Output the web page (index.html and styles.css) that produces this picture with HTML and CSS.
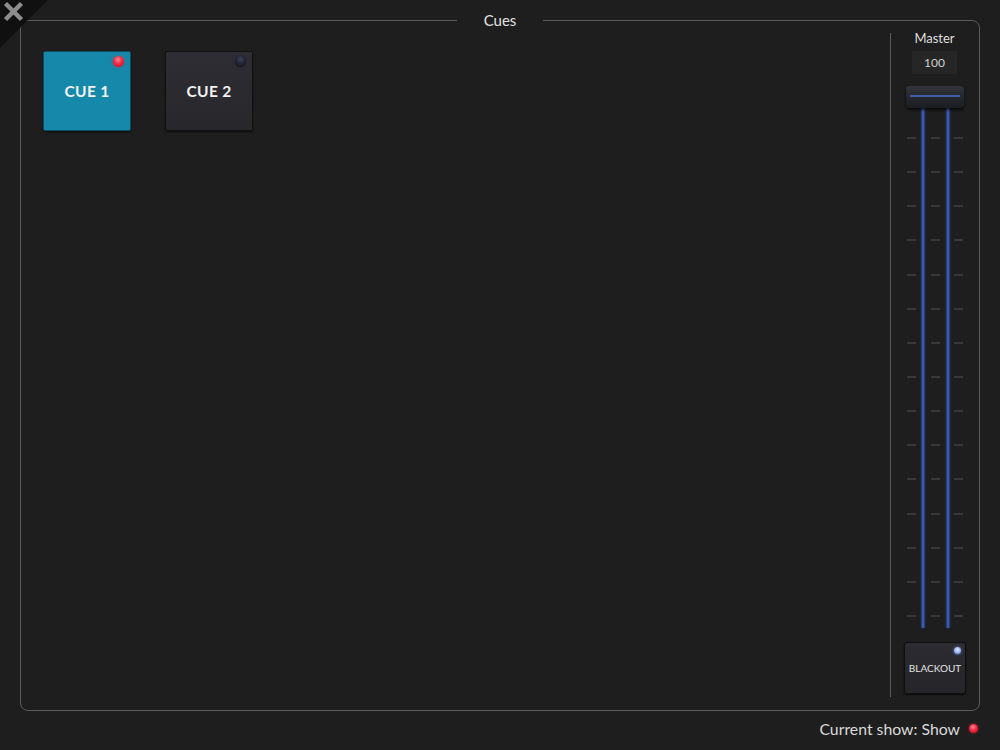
FILE: index.html
```html
<!DOCTYPE html>
<html>
<head>
    <title>Cues</title>
    <link rel="stylesheet" href="styles.css">
</head>
<body>
    <a class="close" href="#" title="Close">
        <svg width="48" height="48" viewBox="0 0 48 48">
            <polygon points="0,0 48,0 0,48" fill="#101010"/>
            <path d="M5.5 3.5 L21.5 19.5 M21.5 3.5 L5.5 19.5" stroke="#8d8d8d" stroke-width="4.5" stroke-linecap="butt"/>
        </svg>
    </a>

    <fieldset class="cues">
        <legend>Cues</legend>
        <div class="cues-body">
            <div class="cue-grid">
                <button class="cue active">CUE 1<span class="led red"></span></button>
                <button class="cue">CUE 2<span class="led off"></span></button>
            </div>

            <div class="divider"></div>

            <div class="master">
                <div class="master-label">Master</div>
                <div class="master-value">100</div>
                <div class="fader">
                    <div class="track">
                        <div class="ticks" id="ticks1"></div>
                        <div class="rail"></div>
                        <div class="ticks" id="ticks2"></div>
                        <div class="rail"></div>
                        <div class="ticks" id="ticks3"></div>
                    </div>
                    <div class="knob"><span class="knob-line"></span></div>
                </div>
                <button class="blackout">BLACKOUT<span class="led blue"></span></button>
            </div>
        </div>
    </fieldset>

    <div class="footer">
        <span>Current show: Show</span>
        <span class="led red small"></span>
    </div>

    <script>
        // fill the fader scale
        ['ticks1', 'ticks2', 'ticks3'].forEach(function (id) {
            var col = document.getElementById(id);
            for (var i = 0; i < 15; i++) {
                var t = document.createElement('span');
                t.className = 'tick';
                col.appendChild(t);
            }
        });
    </script>
</body>
</html>
```

FILE: styles.css
```css
body {
    margin: 0;
    width: 1000px;
    height: 750px;
    overflow: hidden;
    background-color: #1e1e1e;
    font-family: Lato, "Open Sans", sans-serif;
    color: #dcdcdc;
}
.close {
    position: absolute;
    top: 0;
    left: 0;
    width: 48px;
    height: 48px;
    display: block;
}
.close svg {
    display: block;
}
.cues {
    margin: 10px 20px 0 20px;
    padding: 0;
    border: 1px solid #5c5c5c;
    border-radius: 8px;
    min-width: 0;
}
.cues legend {
    margin: 0 auto;
    padding: 0 27px;
    font-size: 15px;
    line-height: 20px;
    color: #e2e2e2;
}
.cues-body {
    display: flex;
    height: 680px;
}
.cue-grid {
    flex: 1;
    display: flex;
    align-items: flex-start;
    gap: 34px;
    padding: 21px 0 0 22px;
}
.cue {
    position: relative;
    width: 88px;
    height: 80px;
    border: 1px solid #111;
    border-radius: 2px;
    background: linear-gradient(#2e2d33, #28272c);
    box-shadow: 0 1px 2px rgba(0, 0, 0, 0.6);
    color: #f2f2f2;
    font-family: Lato, "Open Sans", sans-serif;
    font-weight: bold;
    font-size: 15.5px;
    letter-spacing: 0.3px;
    padding: 0;
    cursor: pointer;
}
.cue.active {
    background: #1688aa;
    border-color: #0d4e62;
}
.led {
    position: absolute;
    border-radius: 50%;
}
.cue .led {
    top: 4px;
    right: 6px;
    width: 11px;
    height: 11px;
}
.led.red {
    background: radial-gradient(circle at 45% 35%, #ff8a98 0, #f5263f 45%, #c80c22 100%);
    box-shadow: 0 0 3px rgba(255, 40, 60, 0.5);
}
.led.off {
    background: radial-gradient(circle at 50% 30%, #3a4256 0, #1b1f2b 60%, #111420 100%);
    box-shadow: 0 0 1px #000;
}
.led.blue {
    top: 4px;
    right: 4px;
    width: 7px;
    height: 7px;
    background: radial-gradient(circle at 50% 40%, #e6eeff 0, #9db6ff 50%, #5a7ee0 100%);
    box-shadow: 0 0 3px rgba(130, 160, 255, 0.8);
}
.divider {
    width: 1px;
    background-color: #5c5c5c;
    margin: 3px 0 13px 0;
}
.master {
    width: 88px;
    display: flex;
    flex-direction: column;
    align-items: center;
}
.master-label {
    font-size: 13px;
    line-height: 16px;
    color: #dedede;
    margin-right: 1px;
}
.master-value {
    margin-top: 5px;
    margin-right: 1px;
    width: 45px;
    height: 23px;
    line-height: 23px;
    text-align: center;
    background-color: #262626;
    font-size: 12px;
    color: #d0d0d0;
}
.fader {
    position: relative;
    margin-top: 12px;
    width: 58px;
    height: 542px;
}
.track {
    display: flex;
    padding: 22px 0 0 1px;
}
.ticks {
    width: 9px;
    height: 480px;
    padding-top: 29px;
    display: flex;
    flex-direction: column;
    justify-content: space-between;
}
.tick {
    display: block;
    height: 2px;
    background-color: #383838;
}
.rail {
    width: 4px;
    height: 520px;
    margin: 0 6px 0 5px;
    border-radius: 1px;
    background: linear-gradient(90deg, #1f2f60, #4468c4 50%, #1f2f60);
    box-shadow: 0 0 2px rgba(60, 100, 200, 0.4);
}
.rail + .ticks + .rail {
    margin: 0 4px 0 6px;
}
.knob {
    position: absolute;
    top: 0;
    left: 0;
    width: 58px;
    height: 22px;
    border-radius: 4px;
    background: linear-gradient(#34353c, #25262b 55%, #1c1d21);
    box-shadow: 0 2px 3px rgba(0, 0, 0, 0.7);
}
.knob-line {
    position: absolute;
    top: 9px;
    left: 4px;
    right: 4px;
    height: 2px;
    background-color: #3e5ea8;
}
.blackout {
    position: relative;
    margin-top: 14px;
    width: 62px;
    height: 52px;
    padding: 0;
    border: 1px solid #0e0e0e;
    border-radius: 3px;
    background: linear-gradient(#2c2b31, #25252a);
    box-shadow: 0 1px 2px rgba(0, 0, 0, 0.6);
    color: #e6e6e6;
    font-family: Lato, "Open Sans", sans-serif;
    font-size: 10px;
    cursor: pointer;
}
.footer {
    display: flex;
    justify-content: flex-end;
    align-items: center;
    gap: 9px;
    margin-top: 7px;
    padding-right: 22px;
    height: 20px;
    font-size: 15.8px;
    color: #dadada;
}
.footer .led {
    position: static;
    width: 9px;
    height: 9px;
}
```
